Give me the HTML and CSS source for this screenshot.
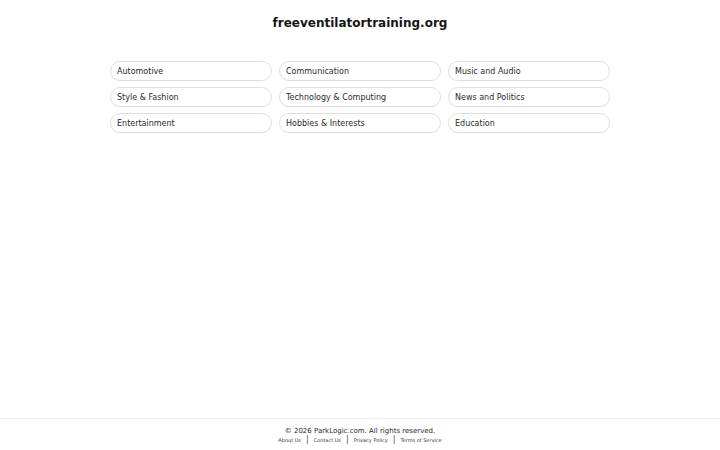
FILE: index.html
```html
<!DOCTYPE html>
<html>
<head>
<meta charset="utf-8">
<link rel="stylesheet" href="styles.css">
</head>
<body>
<div class="page">
  <header class="header"><h1 class="title">freeventilatortraining.org</h1></header>
  <main class="main">
    <div class="grid">
      <a class="pill">Automotive</a>
      <a class="pill">Communication</a>
      <a class="pill">Music and Audio</a>
      <a class="pill">Style &amp; Fashion</a>
      <a class="pill">Technology &amp; Computing</a>
      <a class="pill">News and Politics</a>
      <a class="pill">Entertainment</a>
      <a class="pill">Hobbies &amp; Interests</a>
      <a class="pill">Education</a>
    </div>
  </main>
  <footer class="footer">
    <div class="copy">© 2026 ParkLogic.com. All rights reserved.</div>
    <div class="links">
      <a class="link">About Us</a><span class="sep">|</span><a class="link">Contact Us</a><span class="sep">|</span><a class="link">Privacy Policy</a><span class="sep">|</span><a class="link">Terms of Service</a>
    </div>
  </footer>
</div>
</body>
</html>
```
FILE: styles.css
```css
html, body {
  margin: 0;
  padding: 0;
  background: #fff;
}
body {
  font-family: "DejaVu Sans", sans-serif;
  color: #222;
}
.page {
  height: 450px;
  display: flex;
  flex-direction: column;
}
.header {
  padding-top: 16px;
  text-align: center;
}
.title {
  margin: 0;
  font-size: 12px;
  font-weight: bold;
  line-height: 15px;
  color: #151515;
}
.main {
  flex: 1;
  padding-top: 30px;
}
.grid {
  width: 500px;
  margin: 0 auto;
  display: grid;
  grid-template-columns: repeat(3, 1fr);
  column-gap: 7px;
  row-gap: 6px;
}
.pill {
  display: block;
  height: 20px;
  line-height: 19px;
  box-sizing: border-box;
  border: 1px solid #e0e0e0;
  border-radius: 10px;
  padding: 0 6px;
  font-size: 8px;
  color: #2a2a2a;
  box-shadow: 0 1px 1px rgba(0,0,0,0.03);
}
.footer {
  border-top: 1px solid #eee;
  padding: 7px 0 6px;
  text-align: center;
}
.copy {
  font-size: 7px;
  line-height: 10px;
  color: #2a2a2a;
}
.links {
  font-size: 5px;
  line-height: 8px;
  color: #333;
  display: flex;
  justify-content: center;
  align-items: center;
}
.sep {
  font-size: 8px;
  margin: 0 5px;
  color: #444;
}
```
